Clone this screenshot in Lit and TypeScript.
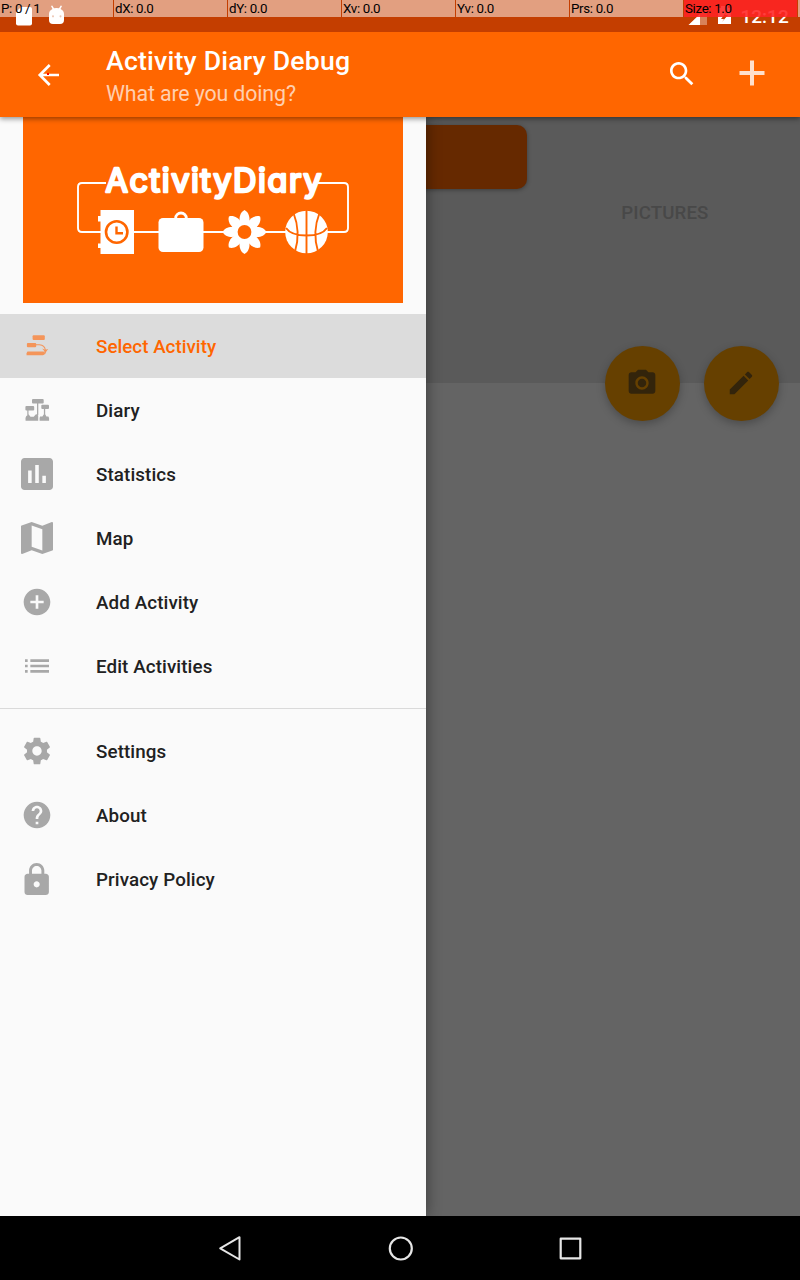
import { LitElement, html, css, svg } from "lit";
import { customElement, property } from "lit/decorators.js";

const shapes: Record<string, { box: string; body: unknown }> = {
  select: {
    box: "0 0 32 32",
    body: svg`<rect x="11.6" y="5.2" width="12.2" height="4.9" rx="1"/><rect x="5.900" y="13" width="9.300" height="4.300" rx="1"/>
      <path d="M6.500 21.500h16l1.800 1.500-.8 1.600-1.600.6H5.600q-.7-2 .9-3.700z"/>
      <path d="M15 14.700h3.500c4 .2 5.500 2 5.900 5.500" fill="none" stroke="currentColor" stroke-width="1.100"/>
      <path d="M21 18.500l3.200 1.200 3-.6-1.700 2.100-1.500 3.100-.9-3.500z"/>`,
  },
  diary: {
    box: "0 0 32 32",
    body: svg`<rect x="11" y="5" width="11.700" height="4.500" rx="1"/><rect x="4.400" y="12" width="8.800" height="4.600" rx="1"/><rect x="20.300" y="10.800" width="7.700" height="4.100" rx="1"/>
      <path d="M6.300 16h1.200v4.200l2 2.600h3.200l2-2.200 1-.4 1.500 1.200v5.400H4.600q-.7-2.800.7-4.700l1-.6z"/>
      <path d="M16 9h1.300v12H16zM22.900 14.500h1.300v5.800l1.200 2.200h2q1 .7.700 4.200h-9.500q-.3-3.500.5-4.200h2.300l1.500-2.200z"/>`,
  },
  stats: {
    box: "3 3 18 18",
    body: svg`<path d="M19 3H5c-1.100 0-2 .9-2 2v14c0 1.100.9 2 2 2h14c1.100 0 2-.9 2-2V5c0-1.100-.9-2-2-2zM9 17H7v-7h2v7zm4 0h-2V7h2v10zm4 0h-2v-4h2v4z"/>`,
  },
  map: {
    box: "3 3 18 18",
    body: svg`<path d="M20.500 3l-.160.030L15 5.100 9 3 3.360 4.900c-.210.070-.36.250-.36.480V20.500c0 .280.220.5.500.5l.160-.030L9 18.900l6 2.100 5.640-1.900c.210-.070.36-.250.36-.480V3.500c0-.280-.220-.5-.500-.5zM15 19l-6-2.110V5l6 2.110V19z"/>`,
  },
  add: {
    box: "0 0 24 24",
    body: svg`<path d="M12 2C6.480 2 2 6.480 2 12s4.480 10 10 10 10-4.480 10-10S17.520 2 12 2zm5 11h-4v4h-2v-4H7v-2h4V7h2v4h4v2z"/>`,
  },
  list: {
    box: "0 0 24 24",
    body: svg`<path d="M3 13h2v-2H3v2zm0 4h2v-2H3v2zm0-8h2V7H3v2zm4 4h14v-2H7v2zm0 4h14v-2H7v2zM7 7v2h14V7H7z"/>`,
  },
  settings: {
    box: "0 0 24 24",
    body: svg`<path d="M19.430 12.980c.040-.320.070-.640.070-.980s-.030-.660-.070-.980l2.110-1.650c.190-.150.240-.420.120-.640l-2-3.460c-.120-.220-.390-.300-.610-.220l-2.490 1c-.520-.400-1.080-.730-1.690-.980l-.380-2.650C14.460 2.180 14.250 2 14 2h-4c-.250 0-.460.180-.490.420l-.380 2.650c-.610.250-1.170.590-1.690.980l-2.490-1c-.230-.090-.490 0-.610.220l-2 3.460c-.130.220-.070.490.120.640l2.110 1.650c-.040.320-.070.650-.070.980s.030.660.070.980l-2.110 1.650c-.190.150-.240.420-.120.640l2 3.460c.120.220.390.300.610.220l2.490-1c.520.400 1.080.730 1.690.980l.380 2.650c.030.240.240.420.490.420h4c.250 0 .460-.180.490-.420l.380-2.650c.610-.250 1.170-.590 1.690-.980l2.490 1c.230.090.490 0 .610-.220l2-3.460c.120-.220.070-.490-.120-.640l-2.110-1.650zM12 15.500c-1.930 0-3.500-1.570-3.500-3.500s1.570-3.500 3.500-3.500 3.500 1.570 3.500 3.500-1.570 3.500-3.500 3.500z"/>`,
  },
  help: {
    box: "0 0 24 24",
    body: svg`<path d="M12 2C6.480 2 2 6.480 2 12s4.480 10 10 10 10-4.480 10-10S17.520 2 12 2zm1 17h-2v-2h2v2zm2.070-7.750l-.9.920C13.450 12.900 13 13.500 13 15h-2v-.5c0-1.100.450-2.100 1.170-2.830l1.240-1.260c.370-.360.590-.860.590-1.410 0-1.100-.9-2-2-2s-2 .9-2 2H8c0-2.210 1.790-4 4-4s4 1.790 4 4c0 .880-.360 1.680-.930 2.250z"/>`,
  },
  lock: {
    box: "1.7 1 21 21",
    body: svg`<path d="M18 8h-1V6c0-2.760-2.240-5-5-5S7 3.240 7 6v2H6c-1.100 0-2 .9-2 2v10c0 1.100.9 2 2 2h12c1.100 0 2-.9 2-2V10c0-1.100-.9-2-2-2zm-6 9c-1.100 0-2-.9-2-2s.9-2 2-2 2 .9 2 2-.9 2-2 2zm3.100-9H8.900V6c0-1.710 1.390-3.100 3.100-3.100 1.710 0 3.100 1.390 3.100 3.100v2z"/>`,
  },
  search: {
    box: "0 0 24 24",
    body: svg`<path d="M15.500 14h-.790l-.280-.270C15.410 12.590 16 11.110 16 9.500 16 5.910 13.090 3 9.500 3S3 5.910 3 9.500 5.910 16 9.500 16c1.610 0 3.090-.590 4.230-1.570l.270.280v.790l5 4.990L20.490 19l-4.990-5zm-6 0C7.010 14 5 11.990 5 9.500S7.010 5 9.500 5 14 7.010 14 9.500 11.990 14 9.500 14z"/>`,
  },
  plus: {
    box: "0 0 32 32",
    body: svg`<path d="M14 3.500h4V14h10.500v4H18v10.500h-4V18H3.500v-4H14z"/>`,
  },
  camera: {
    box: "0 0 24 24",
    body: svg`<circle cx="12" cy="12" r="3.200"/><path d="M9 2L7.170 4H4c-1.100 0-2 .9-2 2v12c0 1.100.9 2 2 2h16c1.100 0 2-.9 2-2V6c0-1.100-.9-2-2-2h-3.170L15 2H9zm3 15c-2.760 0-5-2.240-5-5s2.240-5 5-5 5 2.240 5 5-2.240 5-5 5z"/>`,
  },
  pencil: {
    box: "-0.8 -0.8 25.6 25.6",
    body: svg`<path d="M3 17.250V21h3.750L17.810 9.940l-3.750-3.750L3 17.250zM20.710 7.040c.390-.390.390-1.020 0-1.410l-2.340-2.340c-.390-.390-1.020-.390-1.410 0l-1.830 1.830 3.750 3.750 1.830-1.830z"/>`,
  },
};

@customElement("glyph-icon")
class GlyphIcon extends LitElement {
  @property() name = "";
  static styles = css`
    :host { display: block; width: 32px; height: 32px; flex: none; }
    svg { display: block; width: 100%; height: 100%; }
  `;
  render() {
    const s = shapes[this.name];
    return html`<svg viewBox=${s.box} fill="currentColor">${s.body}</svg>`;
  }
}

@customElement("diary-logo")
class DiaryLogo extends LitElement {
  static styles = css`
    :host { display: block; width: 380px; height: 186px; background: #ff6600; }
    svg { display: block; }
    .word { font: 400 32.500px Inter, sans-serif; font-optical-sizing: none; font-feature-settings: "cv11" 1, "ss03" 1; }
  `;
  render() {
    return html`<svg width="380" height="186" viewBox="23 117 380 186">
      <path d="M106 183H82q-4 0-4 4v41q0 4 4 4h262q4 0 4-4v-41q0-4-4-4h-26" fill="none" stroke="#fff" stroke-width="1.900"/>
      <text class="word" x="105.500" y="191.500" textLength="216" fill="#fff" stroke="#fff" stroke-width="2.500" stroke-linejoin="round">ActivityDiary</text>
      <path d="M100.500 210H134v44h-33.500v-6H98v-4.500h2.500v-22H98V216h2.500z" fill="#fff"/>
      <circle cx="116.700" cy="232" r="10.700" fill="#fff" stroke="#f60" stroke-width="2.600"/>
      <path d="M116.500 226.500v6.800h6.500" fill="none" stroke="#f60" stroke-width="2.400"/>
      <rect x="158.500" y="218" width="45" height="34" rx="4.500" fill="#fff"/>
      <path d="M175.700 219.500v-1.500a5.300 5 0 0 1 10.600 0v1.500" fill="none" stroke="#fff" stroke-width="2.800"/>
      <g fill="#fff">
        ${[0, 45, 90, 135, 180, 225, 270, 315].map(
          (a) => svg`<path transform="rotate(${a} 244.500 232)" d="M240 223c-1.500-5.500.5-11 4.500-13 4 2 6 7.500 4.500 13l-4.500 4z"/>`
        )}
        <circle cx="244.500" cy="232" r="11.500"/>
      </g>
      <circle cx="244.500" cy="232" r="6.900" fill="#f60"/>
      <circle cx="306.500" cy="232" r="21.300" fill="#fff"/>
      <path d="M306.500 210v44M286 228q5 7.500 20.500 7.500t20.500-7.500M293.500 213q7.500 19 1.500 38.500M319.500 213q-7.500 19-1.500 38.500" fill="none" stroke="#f60" stroke-width="1.900"/>
    </svg>`;
  }
}

const mainItems = [
  ["select", "Select Activity"],
  ["diary", "Diary"],
  ["stats", "Statistics"],
  ["map", "Map"],
  ["add", "Add Activity"],
  ["list", "Edit Activities"],
];
const moreItems = [
  ["settings", "Settings"],
  ["help", "About"],
  ["lock", "Privacy Policy"],
];
const pointer = ["P: 0 / 1", "dX: 0.0", "dY: 0.0", "Xv: 0.0", "Yv: 0.0", "Prs: 0.0", "Size: 1.0"];

@customElement("app-root")
class AppRoot extends LitElement {
  static styles = css`
    :host { display: flex; flex-direction: column; width: 800px; height: 1280px; overflow: hidden; font-family: Roboto, sans-serif; }
    .status { position: relative; height: 32px; flex: none; background: #c43e00; color: #fff; z-index: 4; }
    .status-art { display: block; }
    .clock { font-size: 19px; font-weight: 500; }
    .pointer { position: absolute; inset: 0 0 auto 0; height: 17px; display: grid; grid-template-columns: repeat(7, 113px) 1fr; column-gap: 1px; }
    .cell { background: rgba(255, 255, 255, 0.5); color: #000; font-size: 13.330px; letter-spacing: -0.340px; line-height: 17px; padding-left: 1px; white-space: nowrap; }
    .cell.hot { background-image: linear-gradient(rgba(255, 0, 0, 0.76), rgba(255, 0, 0, 0.76)); }
    .bar { height: 85px; flex: none; background: #ff6600; color: #fff; display: flex; align-items: center; box-shadow: 0 2px 5px rgba(0, 0, 0, 0.4); z-index: 3; position: relative; }
    .back { width: 24px; height: 24px; margin-left: 37px; margin-right: 45px; }
    .titles { flex: 1; padding-top: 2px; }
    .title { font-size: 26.670px; font-weight: 500; line-height: 31px; letter-spacing: 0.200px; }
    .sub { font-size: 21.330px; line-height: 25px; color: rgba(255, 255, 255, 0.7); margin-top: 4px; letter-spacing: -0.120px; }
    .search { margin-right: 37.500px; margin-bottom: 2px; }
    .plus { color: rgba(255, 255, 255, 0.8); margin-right: 32.500px; margin-bottom: 3px; }
    .content { flex: 1; position: relative; background: #646464; z-index: 1; overflow: hidden; }
    .panel { height: 266px; background: #5a5a5a; display: flex; justify-content: space-between; align-items: flex-start; }
    .activity { width: 523px; margin: 8px 0 0 4px; height: 64px; border-radius: 10px; background: #662900; box-shadow: 0 1px 4px rgba(0, 0, 0, 0.35); }
    .tab { font-size: 18.670px; font-weight: 500; line-height: 22px; color: #484848; margin: 85px 91.500px 0 0; letter-spacing: 0.120px; }
    .fabs { position: absolute; right: 21px; top: 229px; display: flex; gap: 24px; }
    .fab { width: 75px; height: 75px; border-radius: 50%; background: #664000; color: #33240b; display: flex; align-items: center; justify-content: center; box-shadow: 0 3px 8px rgba(0, 0, 0, 0.25); }
    .fab glyph-icon { margin: 0 1px 2px 0; }
    .drawer { position: absolute; left: 0; top: 0; bottom: 0; width: 426px; background: #fafafa; box-shadow: 0 0 14px rgba(0, 0, 0, 0.45); }
    .drawer diary-logo { margin: 0 0 11px 23px; }
    .item { height: 64px; display: flex; align-items: center; padding-left: 21px; gap: 43px; font-size: 18.800px; font-weight: 500; letter-spacing: 0.100px; color: #212121; }
    .item span { padding-top: 2px; }
    .item glyph-icon { color: #a8a8a8; }
    .item.on { background: #dcdcdc; color: #ff6600; letter-spacing: 0.020px; }
    .item.on glyph-icon { color: #f4955a; }
    .rule { height: 1px; background: #dadada; margin: 10px 0; }
    .nav { height: 64px; flex: none; background: #000; z-index: 4; display: flex; justify-content: center; align-items: center; gap: 138px; padding-left: 1px; }
    .nav svg { display: block; }
  `;
  private row([icon, label]: string[], on = false) {
    return html`<div class="item ${on ? "on" : ""}"><glyph-icon name=${icon}></glyph-icon><span>${label}</span></div>`;
  }
  render() {
    return html`
      <div class="status">
        <svg class="status-art" width="800" height="32" fill="#fff">
          <path d="M21 7h9q2 0 2 2v14.500q0 2-2 2H18q-2 0-2-2V12z"/>
          <path d="M49 14q0-3.500 3.500-5L51 6l1.200-.5L54 8.300q2.500-.6 5 0l1.800-2.800L62 6l-1.500 3q3.500 1.500 3.500 5v6q0 4-4 4h-7q-4 0-4-4z"/>
          <circle cx="53" cy="16.300" r="1" fill="#d98b66"/><circle cx="60.500" cy="16.300" r="1" fill="#d98b66"/>
          <path d="M707 7v18h-18z" opacity=".35"/><path d="M700 14v11h-11.500z"/>
          <path d="M718 8h3V6h7v2h3v16h-13z"/><path d="M727 11l-6 8h3l-2 3 6-7h-3z" fill="#c43e00"/>
          <text class="clock" x="740.500" y="23">12:12</text>
        </svg>
        <div class="pointer">
          ${pointer.map((t, i) => html`<div class="cell ${i === 6 ? "hot" : ""}">${t}</div>`)}
          <div class="cell"></div>
        </div>
      </div>
      <div class="bar">
        <svg class="back" viewBox="0 0 24 24" fill="none" stroke="#fff" stroke-width="2.700">
          <path d="M12.700 2L2.800 12l9.900 10M2.500 12H22"/><path d="M10 11h2" stroke="#f00" stroke-width="2"/>
        </svg>
        <div class="titles">
          <div class="title">Activity Diary Debug</div>
          <div class="sub">What are you doing?</div>
        </div>
        <glyph-icon class="search" name="search"></glyph-icon>
        <glyph-icon class="plus" name="plus"></glyph-icon>
      </div>
      <div class="content">
        <div class="panel">
          <div class="activity"></div>
          <div class="tab">PICTURES</div>
        </div>
        <div class="fabs">
          <div class="fab"><glyph-icon name="camera"></glyph-icon></div>
          <div class="fab"><glyph-icon name="pencil"></glyph-icon></div>
        </div>
        <div class="drawer">
          <diary-logo></diary-logo>
          ${mainItems.map((m, i) => this.row(m, i === 0))}
          <div class="rule"></div>
          ${moreItems.map((m) => this.row(m))}
        </div>
      </div>
      <div class="nav">
        <svg width="32" height="32" fill="none" stroke="#e6e6e6" stroke-width="2" stroke-linejoin="round"><path d="M24.500 5.200v22.300L5.200 16.300z"/></svg>
        <svg width="32" height="32" fill="none" stroke="#e6e6e6" stroke-width="2.200"><circle cx="15.800" cy="16.500" r="11"/></svg>
        <svg width="32" height="32" fill="none" stroke="#e6e6e6" stroke-width="2.200" stroke-linejoin="round"><rect x="5.700" y="6.700" width="19.600" height="19.600"/></svg>
      </div>`;
  }
}
